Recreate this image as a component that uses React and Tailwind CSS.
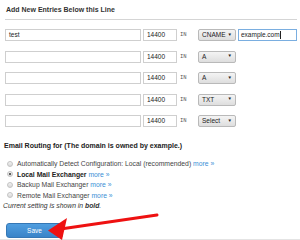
import React from "react";

const rows = [
  { name: "test", type: "CNAME", extra: "example.com" },
  { name: "", type: "A" },
  { name: "", type: "A" },
  { name: "", type: "TXT" },
  { name: "", type: "Select" },
];

const options = [
  { label: "Automatically Detect Configuration: Local (recommended)" },
  { label: "Local Mail Exchanger", bold: true, checked: true },
  { label: "Backup Mail Exchanger" },
  { label: "Remote Mail Exchanger" },
];

const SelectBox = ({ value }) => (
  <div className="w-[38px] h-[12px] flex items-center justify-between px-[3px] border border-[#b9b9b9] rounded-[2px] bg-gradient-to-b from-[#f4f4f4] to-[#dedede] text-[6.5px] text-[#222]">
    <span>{value}</span>
    <span className="text-[4.5px] text-[#222]">▼</span>
  </div>
);

const Row = ({ row }) => (
  <div className="flex items-center h-[12px]">
    <div className="w-[136px] h-[12px] ml-[5px] border border-[#cfcfcf] bg-white flex items-center px-[3px] text-[6.5px] text-[#222]">
      {row.name}
    </div>
    <div className="w-[34px] h-[12px] ml-[2px] border border-[#cfcfcf] bg-white flex items-center px-[3px] text-[6.5px] text-[#222]">
      14400
    </div>
    <span className="ml-[3px] w-[18px] h-[12px] leading-[12px] text-[5.5px] text-[#555] font-['Liberation_Mono',monospace]">IN</span>
    <SelectBox value={row.type} />
    {row.extra && (
      <div className="w-[59px] h-[12px] ml-[2px] border border-[#7aaee0] bg-white flex items-center px-[2px] text-[6.5px] text-[#222]">
        {row.extra}
        <span className="w-px h-[8px] bg-[#222]" />
      </div>
    )}
  </div>
);

export default function App() {
  return (
    <div className="relative w-[300px] h-[240px] bg-white overflow-hidden font-['Liberation_Sans',Arial,sans-serif]">
      <div className="pt-[6px] pl-[6px] text-[7px] font-bold text-[#333] leading-[8px]">
        Add New Entries Below this Line
      </div>
      <div className="mt-[5px] ml-[5px] mr-[3px] border-t border-[#d5d5d5]" />

      <div className="mt-[9px] flex flex-col gap-[9.5px]">
        {rows.map((row, i) => (
          <Row key={i} row={row} />
        ))}
      </div>

      <div className="mt-[14px] pl-[4px] text-[7px] font-bold text-[#222] leading-[9px]">
        Email Routing for (The domain is owned by example.)
      </div>

      <div className="mt-[10px] pl-[7px] flex flex-col gap-[3.6px] text-[6.8px] text-[#444] leading-[7px]">
        {options.map((o, i) => (
          <div key={i} className="flex items-center gap-[4px]">
            <span className="w-[6px] h-[6px] rounded-full border border-[#c4c4c4] bg-gradient-to-b from-[#f2f2f2] to-[#d8d8d8] flex items-center justify-center">
              {o.checked && <span className="w-[2.5px] h-[2.5px] rounded-full bg-[#333]" />}
            </span>
            <span className={o.bold ? "font-bold text-[#222]" : ""}>
              {o.label}{" "}
              <span className="text-[#3b8fd6] font-normal">more »</span>
            </span>
          </div>
        ))}
        <div className="-ml-[4px] italic text-[#333]">
          Current setting is shown in <b>bold</b>.
        </div>
      </div>

      <button className="mt-[14px] ml-[6px] w-[57px] h-[15px] rounded-[3px] bg-gradient-to-b from-[#4f9ee0] to-[#3a84c8] border border-[#3577b5] text-white text-[6.5px] flex items-center justify-center">
        Save
      </button>
      <div className="absolute left-0 right-0 bottom-0 h-[1px] bg-[#e4e4e4]" />

      <svg className="absolute left-0 top-0" width="300" height="240" viewBox="0 0 300 240">
        <line x1="157" y1="215" x2="64" y2="228.5" stroke="#ee1111" strokeWidth="3" strokeLinecap="round" />
        <polygon points="48,230.5 67,218 62,240" fill="#ee1111" />
      </svg>
    </div>
  );
}
